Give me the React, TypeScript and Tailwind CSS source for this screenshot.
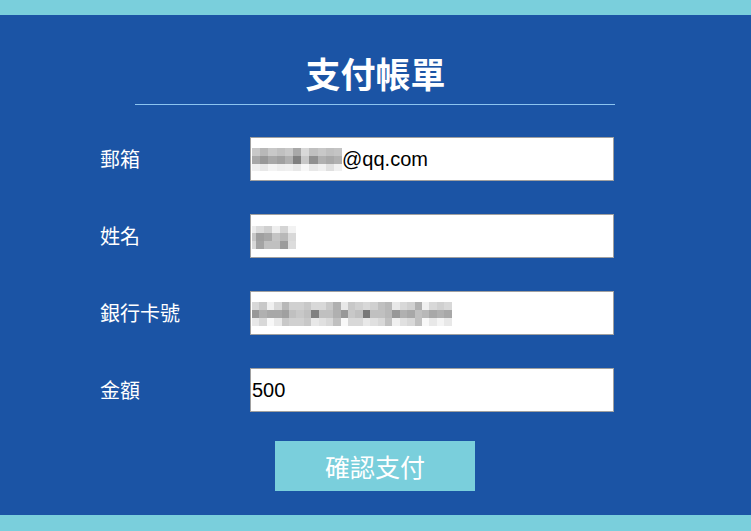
import React from "react";

const hex = (v: number) => {
  const h = v.toString(16).padStart(2, "0");
  return `#${h}${h}${h}`;
};

function Mosaic({ rows, colW, rowH }: { rows: number[][]; colW: number[]; rowH: number[] }) {
  return (
    <div className="flex flex-col">
      {rows.map((r, i) => (
        <div key={i} className="flex">
          {r.map((c, j) => (
            <div key={j} style={{ width: colW[j], height: rowH[i], background: hex(c) }} />
          ))}
        </div>
      ))}
    </div>
  );
}

const emailRows = [
  [0xc8, 0xb8, 0xc8, 0xc0, 0xc8, 0xa8, 0xd8, 0xc0, 0xc8, 0xc0, 0xc4],
  [0xa8, 0x98, 0xa8, 0xa0, 0xb0, 0x80, 0xc8, 0x90, 0xb0, 0xa8, 0xb0],
  [0xf0, 0xe8, 0xf4, 0xee, 0xf0, 0xe8, 0xf8, 0xe8, 0xf0, 0xe0, 0xf0],
];
const emailCols = Array(11).fill(8.2);

const nameRows = [
  [0xec, 0xdc, 0xd0, 0xee, 0xd4, 0xf2],
  [0xc8, 0xa0, 0xa8, 0xc4, 0xb8, 0xd8],
  [0xd8, 0xa4, 0xc0, 0xc0, 0x9c, 0xdc],
];
const nameCols = [4, 8, 8, 8, 8, 8];

const cardRows = [
  [0xd8, 0xc8, 0xf0, 0xd8, 0xb8, 0xd0, 0xd0, 0xc8, 0xd8, 0xd8, 0xc8, 0xb0, 0xe8, 0xc8, 0xd0, 0xd8, 0xd0, 0xc0, 0xb8, 0xe8, 0xd8, 0xd0, 0xb0, 0xf0, 0xd8, 0xd0, 0xd8],
  [0x98, 0xb0, 0xa8, 0xa8, 0xa0, 0xc0, 0xc8, 0xc0, 0x80, 0xc0, 0xc0, 0xb0, 0x98, 0xc8, 0xc0, 0x78, 0xc0, 0xc0, 0xb8, 0x98, 0xb0, 0xa8, 0xc0, 0xb8, 0xa8, 0xb0, 0xa8],
  [0xe8, 0xd8, 0xf8, 0xe8, 0xc8, 0xd0, 0xd0, 0xc8, 0xe8, 0xe0, 0xd8, 0xc0, 0xf8, 0xd8, 0xd8, 0xe8, 0xe0, 0xd8, 0xc0, 0xf0, 0xe0, 0xd8, 0xc0, 0xf8, 0xe8, 0xf4, 0xe8],
];
const cardCols = Array(27).fill(7.4);

const cjk = { fontFamily: '"Noto Sans CJK TC", "Noto Sans CJK SC", sans-serif' };
const latin = { fontFamily: '"Liberation Sans", Arial, sans-serif' };

function Row({ label, children }: { label: string; children: React.ReactNode }) {
  return (
    <div className="flex items-center">
      <div className="w-[150px] text-[20px] text-white leading-none" style={cjk}>
        {label}
      </div>
      <div className="w-[364px] h-[44px] bg-white border border-[#a0a0a0] flex items-center pl-[1px]">
        {children}
      </div>
    </div>
  );
}

export default function App() {
  return (
    <div className="w-[751px] h-[531px] flex flex-col bg-[#1b54a5]">
      <div className="h-[15px] bg-[#7acfdc]" />
      <div className="flex-1 flex flex-col">
        <div className="pt-[33px] flex flex-col">
          <h1 className="h-[50px] leading-[50px] text-[35px] font-bold text-white text-center" style={cjk}>
            支付帳單
          </h1>
          <div className="mt-[6px] ml-[135px] w-[480px] h-px bg-[#8cc4f0]" />
        </div>
        <div className="mt-[32px] pl-[100px] flex flex-col gap-[33px]">
          <Row label="郵箱">
            <div className="flex items-center">
              <div className="mt-[1px]">
                <Mosaic rows={emailRows} colW={emailCols} rowH={[8, 8, 7]} />
              </div>
              <span className="text-[20px] text-black" style={latin}>
                @qq.com
              </span>
            </div>
          </Row>
          <Row label="姓名">
            <div className="mt-[2px]">
              <Mosaic rows={nameRows} colW={nameCols} rowH={[7, 8, 8]} />
            </div>
          </Row>
          <Row label="銀行卡號">
            <div className="mt-[2px]">
              <Mosaic rows={cardRows} colW={cardCols} rowH={[8, 8, 8]} />
            </div>
          </Row>
          <Row label="金額">
            <span className="text-[20px] text-black" style={latin}>
              500
            </span>
          </Row>
        </div>
        <div className="mt-[29px] pl-[275px] flex">
          <button
            className="w-[200px] h-[50px] bg-[#7acfdc] text-white text-[25px] leading-none"
            style={cjk}
          >
            確認支付
          </button>
        </div>
      </div>
      <div className="h-[16px] bg-[#7acfdc]" />
    </div>
  );
}
